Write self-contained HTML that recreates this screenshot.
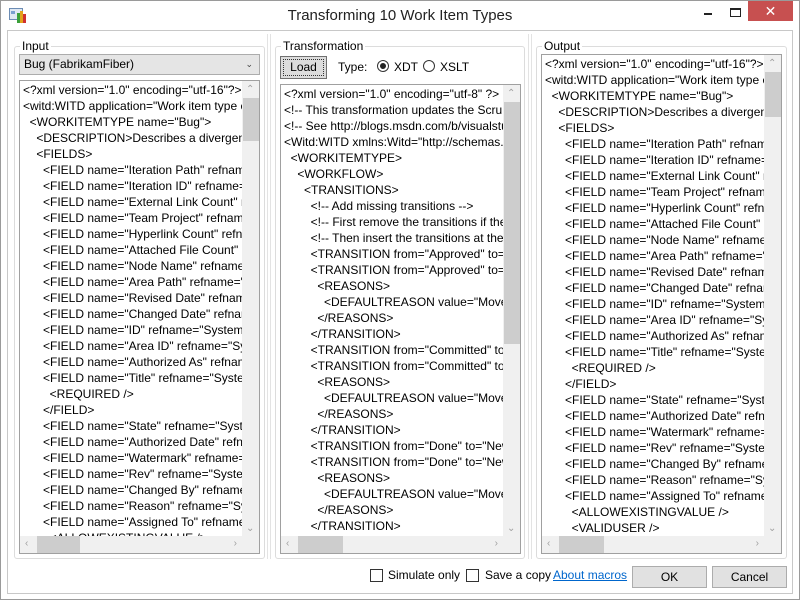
<!DOCTYPE html>
<html><head><meta charset="utf-8"><style>
*{margin:0;padding:0;box-sizing:border-box}
body{width:800px;height:600px;overflow:hidden;background:#fff;font-family:"Liberation Sans","DejaVu Sans",sans-serif;font-size:12px;color:#000;position:relative}
.abs{position:absolute}
.frame{left:0;top:0;width:800px;height:600px;border:1px solid #9a9a9a}
.client{left:7px;top:30px;width:786px;height:564px;border:1px solid #c8c8c8;background:#fff}
.grp{border:1px solid #dcdcdc;border-radius:3px}
.lbl{background:#fff;padding:0 2px;font-size:12px;line-height:13px}
.tb{border:1px solid #a0a0a0;background:#fff;overflow:hidden}
.lines{position:absolute;left:3px;top:1px;white-space:pre;line-height:16px}
.lines div{height:16px}
.vs{position:absolute;right:0;top:0;width:17px;bottom:17px;background:#f0f0f0}
.hs{position:absolute;left:0;bottom:0;height:17px;right:17px;background:#f0f0f0}
.corner{position:absolute;right:0;bottom:0;width:17px;height:17px;background:#f0f0f0}
.th{position:absolute;background:#cdcdcd}
.arr{position:absolute;color:#a0a0a0;font-size:10px;line-height:10px}
.btn{border:1px solid #acacac;background:#e1e1e1;text-align:center;line-height:20px;font-size:12px}
.cb{width:13px;height:13px;border:1px solid #333;background:#fff}
.rad{width:12px;height:12px;border:1px solid #333;border-radius:50%;background:#fff}
.split{width:4px;border-left:1px solid #e3e3e3;border-right:1px solid #e3e3e3}
</style></head><body>
<div class="abs frame"></div>
<!-- title bar -->
<svg class="abs" style="left:9px;top:7px" width="18" height="17" viewBox="0 0 18 17">
<rect x="0.5" y="1.5" width="13" height="11" fill="#dfe8f3" stroke="#6c8cb4"/>
<rect x="2" y="4" width="4" height="3" fill="#7aa0d0"/>
<rect x="8" y="6" width="3" height="10" fill="#3aa03a"/>
<rect x="11" y="4" width="3" height="12" fill="#e2a21a"/>
<rect x="14" y="7" width="3" height="9" fill="#d03030"/>
</svg>
<div class="abs" style="left:0;width:800px;top:6px;text-align:center;font-size:15px;line-height:20px;color:#222">Transforming 10 Work Item Types</div>
<div class="abs" style="left:704px;top:13px;width:8px;height:2px;background:#222"></div>
<div class="abs" style="left:730px;top:8px;width:11px;height:9px;border:1px solid #222;border-top-width:2px"></div>
<div class="abs" style="left:748px;top:1px;width:45px;height:20px;background:#c75050;color:#fff;text-align:center;font-size:14px;line-height:20px;font-weight:bold">✕</div>
<div class="abs client"></div>

<!-- splitters -->
<div class="abs split" style="left:267px;top:34px;height:525px"></div>
<div class="abs split" style="left:528px;top:34px;height:525px"></div>

<!-- INPUT -->
<div class="abs grp" style="left:14px;top:46px;width:251px;height:513px"></div>
<div class="abs lbl" style="left:20px;top:40px">Input</div>
<div class="abs" style="left:19px;top:54px;width:241px;height:21px;background:#e5e5e5;border:1px solid #acacac;padding-left:4px;line-height:19px">Bug (FabrikamFiber)<span style="position:absolute;right:6px;top:0;font-size:9px;color:#444">&#8964;</span></div>
<div class="abs tb" style="left:19px;top:80px;width:241px;height:474px">
<div class="lines"><div>&lt;?xml version="1.0" encoding="utf-16"?&gt;</div><div>&lt;witd:WITD application="Work item type editor" version="1.0"</div><div>  &lt;WORKITEMTYPE name="Bug"&gt;</div><div>    &lt;DESCRIPTION&gt;Describes a divergence between required</div><div>    &lt;FIELDS&gt;</div><div>      &lt;FIELD name="Iteration Path" refname="System.IterationPath"</div><div>      &lt;FIELD name="Iteration ID" refname="System.IterationId"</div><div>      &lt;FIELD name="External Link Count" refname="System"</div><div>      &lt;FIELD name="Team Project" refname="System.TeamProject"</div><div>      &lt;FIELD name="Hyperlink Count" refname="System"</div><div>      &lt;FIELD name="Attached File Count" refname="System"</div><div>      &lt;FIELD name="Node Name" refname="System.NodeName"</div><div>      &lt;FIELD name="Area Path" refname="System.AreaPath"</div><div>      &lt;FIELD name="Revised Date" refname="System.RevisedDate"</div><div>      &lt;FIELD name="Changed Date" refname="System.ChangedDate"</div><div>      &lt;FIELD name="ID" refname="System.Id"</div><div>      &lt;FIELD name="Area ID" refname="System.AreaId"</div><div>      &lt;FIELD name="Authorized As" refname="System.AuthorizedAs"</div><div>      &lt;FIELD name="Title" refname="System.Title"</div><div>        &lt;REQUIRED /&gt;</div><div>      &lt;/FIELD&gt;</div><div>      &lt;FIELD name="State" refname="System.State"</div><div>      &lt;FIELD name="Authorized Date" refname="System"</div><div>      &lt;FIELD name="Watermark" refname="System.Watermark"</div><div>      &lt;FIELD name="Rev" refname="System.Rev"</div><div>      &lt;FIELD name="Changed By" refname="System.ChangedBy"</div><div>      &lt;FIELD name="Reason" refname="System.Reason"</div><div>      &lt;FIELD name="Assigned To" refname="System.AssignedTo"</div><div>        &lt;ALLOWEXISTINGVALUE /&gt;</div></div>
<div class="vs"><div class="th" style="left:1px;width:16px;top:17px;height:43px"></div><div class="arr" style="left:4px;top:4px">&#8963;</div><div class="arr" style="left:4px;bottom:2px">&#8964;</div></div>
<div class="hs"><div class="th" style="top:0;height:17px;left:17px;width:43px"></div><div class="arr" style="left:5px;top:3px">&lsaquo;</div><div class="arr" style="right:5px;top:3px">&rsaquo;</div></div>
<div class="corner"></div>
</div>

<!-- TRANSFORMATION -->
<div class="abs grp" style="left:275px;top:46px;width:250px;height:513px"></div>
<div class="abs lbl" style="left:281px;top:40px">Transformation</div>
<div class="abs btn" style="left:280px;top:56px;width:47px;height:23px;background:#dcdcdc;border-color:#707070;outline:1px dotted #333;outline-offset:-4px">Load</div>
<div class="abs" style="left:338px;top:60px;line-height:14px">Type:</div>
<div class="abs rad" style="left:377px;top:60px"><div style="position:absolute;left:2px;top:2px;width:6px;height:6px;border-radius:50%;background:#222"></div></div>
<div class="abs" style="left:394px;top:60px;line-height:14px">XDT</div>
<div class="abs rad" style="left:423px;top:60px"></div>
<div class="abs" style="left:440px;top:60px;line-height:14px">XSLT</div>
<div class="abs tb" style="left:280px;top:84px;width:241px;height:470px">
<div class="lines"><div>&lt;?xml version="1.0" encoding="utf-8" ?&gt;</div><div>&lt;!-- This transformation updates the Scrum template --&gt;</div><div>&lt;!-- See http://blogs.msdn.com/b/visualstudioalm --&gt;</div><div>&lt;Witd:WITD xmlns:Witd="http://schemas.microsoft.com"</div><div>  &lt;WORKITEMTYPE&gt;</div><div>    &lt;WORKFLOW&gt;</div><div>      &lt;TRANSITIONS&gt;</div><div>        &lt;!-- Add missing transitions --&gt;</div><div>        &lt;!-- First remove the transitions if they exist --&gt;</div><div>        &lt;!-- Then insert the transitions at the end --&gt;</div><div>        &lt;TRANSITION from="Approved" to="New"</div><div>        &lt;TRANSITION from="Approved" to="New"</div><div>          &lt;REASONS&gt;</div><div>            &lt;DEFAULTREASON value="Moved to the backlog"</div><div>          &lt;/REASONS&gt;</div><div>        &lt;/TRANSITION&gt;</div><div>        &lt;TRANSITION from="Committed" to="New"</div><div>        &lt;TRANSITION from="Committed" to="New"</div><div>          &lt;REASONS&gt;</div><div>            &lt;DEFAULTREASON value="Moved to the backlog"</div><div>          &lt;/REASONS&gt;</div><div>        &lt;/TRANSITION&gt;</div><div>        &lt;TRANSITION from="Done" to="New"</div><div>        &lt;TRANSITION from="Done" to="New"</div><div>          &lt;REASONS&gt;</div><div>            &lt;DEFAULTREASON value="Moved to the backlog"</div><div>          &lt;/REASONS&gt;</div><div>        &lt;/TRANSITION&gt;</div></div>
<div class="vs"><div class="th" style="left:1px;width:16px;top:17px;height:242px"></div><div class="arr" style="left:4px;top:4px">&#8963;</div><div class="arr" style="left:4px;bottom:2px">&#8964;</div></div>
<div class="hs"><div class="th" style="top:0;height:17px;left:17px;width:45px"></div><div class="arr" style="left:5px;top:3px">&lsaquo;</div><div class="arr" style="right:5px;top:3px">&rsaquo;</div></div>
<div class="corner"></div>
</div>

<!-- OUTPUT -->
<div class="abs grp" style="left:536px;top:46px;width:251px;height:513px"></div>
<div class="abs lbl" style="left:542px;top:40px">Output</div>
<div class="abs tb" style="left:541px;top:54px;width:241px;height:500px">
<div class="lines"><div>&lt;?xml version="1.0" encoding="utf-16"?&gt;</div><div>&lt;witd:WITD application="Work item type editor" version="1.0"</div><div>  &lt;WORKITEMTYPE name="Bug"&gt;</div><div>    &lt;DESCRIPTION&gt;Describes a divergence between required</div><div>    &lt;FIELDS&gt;</div><div>      &lt;FIELD name="Iteration Path" refname="System.IterationPath"</div><div>      &lt;FIELD name="Iteration ID" refname="System.IterationId"</div><div>      &lt;FIELD name="External Link Count" refname="System"</div><div>      &lt;FIELD name="Team Project" refname="System.TeamProject"</div><div>      &lt;FIELD name="Hyperlink Count" refname="System"</div><div>      &lt;FIELD name="Attached File Count" refname="System"</div><div>      &lt;FIELD name="Node Name" refname="System.NodeName"</div><div>      &lt;FIELD name="Area Path" refname="System.AreaPath"</div><div>      &lt;FIELD name="Revised Date" refname="System.RevisedDate"</div><div>      &lt;FIELD name="Changed Date" refname="System.ChangedDate"</div><div>      &lt;FIELD name="ID" refname="System.Id"</div><div>      &lt;FIELD name="Area ID" refname="System.AreaId"</div><div>      &lt;FIELD name="Authorized As" refname="System.AuthorizedAs"</div><div>      &lt;FIELD name="Title" refname="System.Title"</div><div>        &lt;REQUIRED /&gt;</div><div>      &lt;/FIELD&gt;</div><div>      &lt;FIELD name="State" refname="System.State"</div><div>      &lt;FIELD name="Authorized Date" refname="System"</div><div>      &lt;FIELD name="Watermark" refname="System.Watermark"</div><div>      &lt;FIELD name="Rev" refname="System.Rev"</div><div>      &lt;FIELD name="Changed By" refname="System.ChangedBy"</div><div>      &lt;FIELD name="Reason" refname="System.Reason"</div><div>      &lt;FIELD name="Assigned To" refname="System.AssignedTo"</div><div>        &lt;ALLOWEXISTINGVALUE /&gt;</div><div>        &lt;VALIDUSER /&gt;</div></div>
<div class="vs"><div class="th" style="left:1px;width:16px;top:17px;height:45px"></div><div class="arr" style="left:4px;top:4px">&#8963;</div><div class="arr" style="left:4px;bottom:2px">&#8964;</div></div>
<div class="hs"><div class="th" style="top:0;height:17px;left:17px;width:45px"></div><div class="arr" style="left:5px;top:3px">&lsaquo;</div><div class="arr" style="right:5px;top:3px">&rsaquo;</div></div>
<div class="corner"></div>
</div>

<!-- bottom -->
<div class="abs cb" style="left:370px;top:569px"></div>
<div class="abs" style="left:388px;top:568px;line-height:15px">Simulate only</div>
<div class="abs cb" style="left:466px;top:569px"></div>
<div class="abs" style="left:485px;top:568px;line-height:15px">Save a copy</div>
<div class="abs" style="left:553px;top:568px;line-height:15px;color:#0066cc;text-decoration:underline">About macros</div>
<div class="abs btn" style="left:632px;top:566px;width:75px;height:22px">OK</div>
<div class="abs btn" style="left:712px;top:566px;width:75px;height:22px">Cancel</div>
</body></html>
